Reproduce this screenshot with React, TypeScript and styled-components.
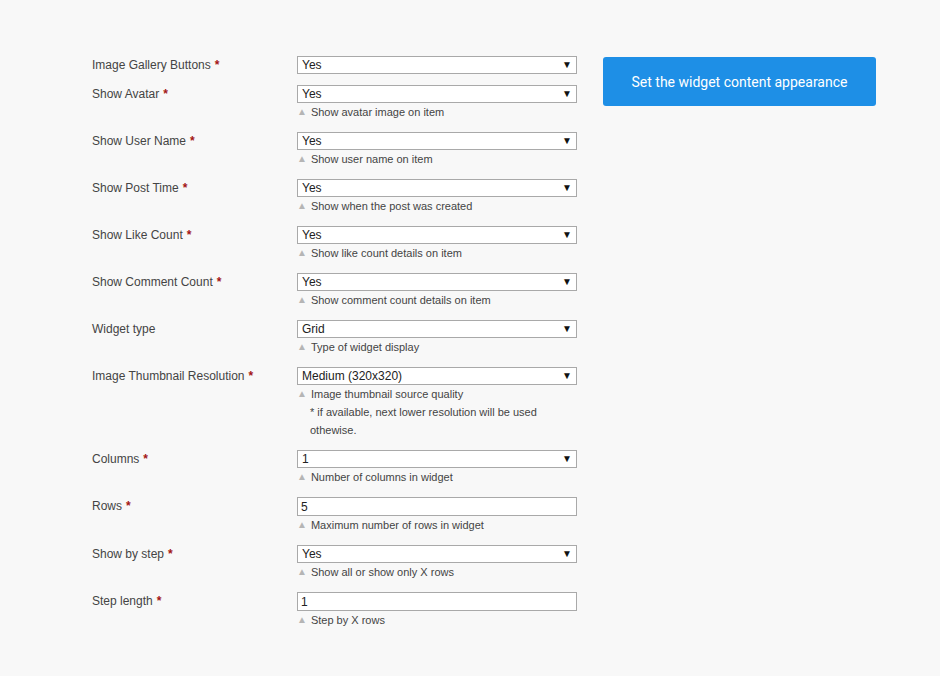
import React from "react";
import styled, { createGlobalStyle } from "styled-components";

type Field = {
  label: string;
  required?: boolean;
  kind: "select" | "input";
  value: string;
  hint?: string;
  note?: string;
};

const fields: Field[] = [
  { label: "Image Gallery Buttons", required: true, kind: "select", value: "Yes" },
  { label: "Show Avatar", required: true, kind: "select", value: "Yes", hint: "Show avatar image on item" },
  { label: "Show User Name", required: true, kind: "select", value: "Yes", hint: "Show user name on item" },
  { label: "Show Post Time", required: true, kind: "select", value: "Yes", hint: "Show when the post was created" },
  { label: "Show Like Count", required: true, kind: "select", value: "Yes", hint: "Show like count details on item" },
  { label: "Show Comment Count", required: true, kind: "select", value: "Yes", hint: "Show comment count details on item" },
  { label: "Widget type", kind: "select", value: "Grid", hint: "Type of widget display" },
  {
    label: "Image Thumbnail Resolution",
    required: true,
    kind: "select",
    value: "Medium (320x320)",
    hint: "Image thumbnail source quality",
    note: "if available, next lower resolution will be used othewise.",
  },
  { label: "Columns", required: true, kind: "select", value: "1", hint: "Number of columns in widget" },
  { label: "Rows", required: true, kind: "input", value: "5", hint: "Maximum number of rows in widget" },
  { label: "Show by step", required: true, kind: "select", value: "Yes", hint: "Show all or show only X rows" },
  { label: "Step length", required: true, kind: "input", value: "1", hint: "Step by X rows" },
];

const App: React.FC = () => {
  return (
    <>
      <GlobalStyle />
      <Page>
        <Form>
          {fields.map((f) => (
            <Row key={f.label}>
              <Label>
                {f.label}
                {f.required && <Star>*</Star>}
              </Label>
              <Control>
                {f.kind === "select" ? (
                  <SelectWrap>
                    <Select defaultValue={f.value}>
                      <option>{f.value}</option>
                    </Select>
                    <Arrow>▼</Arrow>
                  </SelectWrap>
                ) : (
                  <TextInput defaultValue={f.value} />
                )}
                {f.hint && (
                  <Hint>
                    <Caret>▲</Caret>
                    <span>{f.hint}</span>
                  </Hint>
                )}
                {f.note && <Note>{"* " + f.note}</Note>}
              </Control>
            </Row>
          ))}
        </Form>
        <Side>
          <AppearanceButton>Set the widget content appearance</AppearanceButton>
        </Side>
      </Page>
    </>
  );
};

export default App;

const GlobalStyle = createGlobalStyle`
  html, body {
    margin: 0;
    padding: 0;
    background: #f8f8f8;
  }
  body {
    font-family: "Liberation Sans", Arial, sans-serif;
    color: #444;
  }
`;

const Page = styled.div`
  display: flex;
  align-items: flex-start;
  gap: 26px;
  padding: 56px 0 0 92px;
  min-height: 676px;
  box-sizing: border-box;
`;

const Form = styled.div`
  display: flex;
  flex-direction: column;
`;

const Row = styled.div`
  display: grid;
  grid-template-columns: 205px 280px;
  align-items: start;
  padding-bottom: 11px;
`;

const Label = styled.div`
  font-size: 12px;
  line-height: 18px;
  color: #444;
`;

const Star = styled.span`
  color: #a31515;
  font-weight: bold;
  margin-left: 4px;
`;

const Control = styled.div`
  display: flex;
  flex-direction: column;
`;

const SelectWrap = styled.div`
  position: relative;
  height: 18px;
`;

const Select = styled.select`
  appearance: none;
  -webkit-appearance: none;
  display: block;
  width: 280px;
  height: 18px;
  box-sizing: border-box;
  margin: 0;
  padding: 0 20px 0 4px;
  border: 1px solid #a9a9a9;
  border-radius: 0;
  background: #fff;
  font-family: "Liberation Sans", Arial, sans-serif;
  font-size: 12px;
  line-height: 16px;
  color: #222;
  outline: none;
`;

const Arrow = styled.span`
  position: absolute;
  right: 5px;
  top: 4px;
  font-size: 10px;
  line-height: 10px;
  color: #111;
  pointer-events: none;
`;

const TextInput = styled.input`
  display: block;
  width: 280px;
  height: 19px;
  box-sizing: border-box;
  margin: 0;
  padding: 0 3px;
  border: 1px solid #a9a9a9;
  background: #fff;
  font-family: "Liberation Sans", Arial, sans-serif;
  font-size: 12px;
  color: #222;
  outline: none;
`;

const Hint = styled.div`
  display: flex;
  align-items: center;
  font-size: 11px;
  line-height: 18px;
  color: #444;
`;

const Caret = styled.span`
  font-size: 10px;
  line-height: 10px;
  color: #b5b5b5;
  margin: 0 4px 0 0;
`;

const Note = styled.div`
  font-size: 11px;
  line-height: 18px;
  color: #444;
  padding-left: 13px;
  width: 240px;

  &::first-letter {
    font-weight: bold;
    color: #222;
  }
`;

const Side = styled.div`
  padding-top: 1px;
`;

const AppearanceButton = styled.button`
  width: 273px;
  height: 49px;
  border: none;
  border-radius: 3px;
  background: #1e8fe6;
  color: #fff;
  font-family: Roboto, "Liberation Sans", sans-serif;
  font-size: 14px;
  cursor: pointer;
`;
